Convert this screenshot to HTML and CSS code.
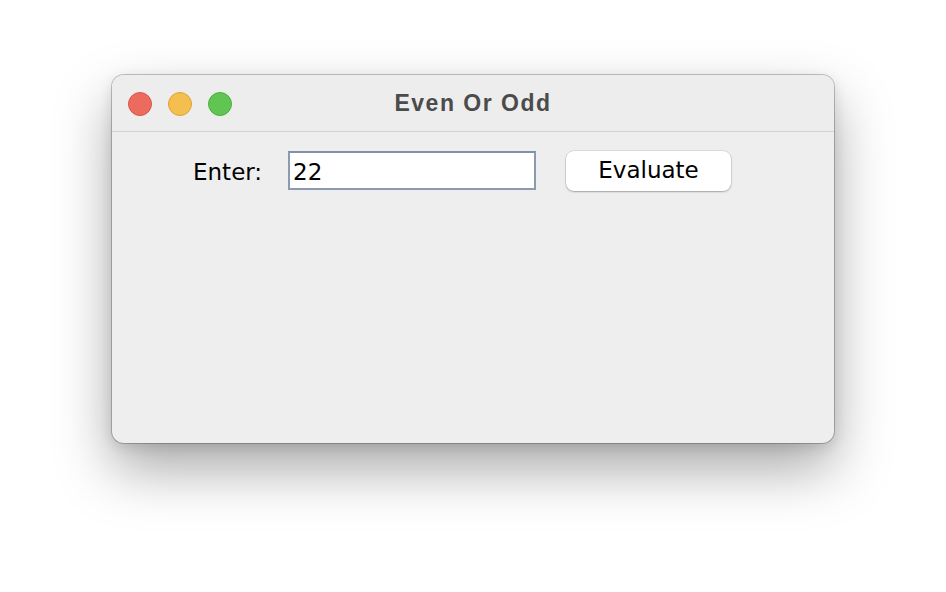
FILE: index.html
```html
<!DOCTYPE html>
<html>
<head>
<meta charset="utf-8">
<link rel="stylesheet" href="styles.css">
</head>
<body>
<div class="window">
  <div class="titlebar">
    <div class="lights">
      <span class="light red"></span>
      <span class="light yellow"></span>
      <span class="light green"></span>
    </div>
    <div class="title">Even Or Odd</div>
  </div>
  <div class="content">
    <div class="row">
      <label class="label">Enter:</label>
      <div class="field">22</div>
      <button class="btn">Evaluate</button>
    </div>
  </div>
</div>
</body>
</html>
```
FILE: styles.css
```css
html, body {
  margin: 0;
  padding: 0;
  background: #ffffff;
  width: 946px;
  height: 592px;
  overflow: hidden;
}
body {
  padding-top: 75px;
  padding-left: 112px;
  box-sizing: border-box;
}
.window {
  width: 722px;
  height: 368px;
  border-radius: 12px;
  background: #eeeeee;
  box-shadow: 0 0 0 1px rgba(0,0,0,0.22), 0 26px 56px rgba(0,0,0,0.34), 0 4px 14px rgba(0,0,0,0.12);
  overflow: hidden;
  display: flex;
  flex-direction: column;
}
.titlebar {
  height: 56px;
  border-bottom: 1px solid #d2d2d2;
  background: #ededed;
  position: relative;
  display: flex;
  align-items: center;
  justify-content: center;
}
.lights {
  position: absolute;
  left: 16px;
  top: 17px;
  display: flex;
  gap: 16px;
}
.light {
  width: 24px;
  height: 24px;
  border-radius: 50%;
  box-sizing: border-box;
}
.red { background: #ed6a5e; border: 1px solid #d8564a; }
.yellow { background: #f5bf4f; border: 1px solid #dea236; }
.green { background: #61c554; border: 1px solid #4ead3e; }
.title {
  font-family: "Liberation Sans", Arial, sans-serif;
  font-weight: bold;
  font-size: 23px;
  letter-spacing: 1.5px;
  color: #4b4b4b;
  margin-top: 1px;
}
.content {
  flex: 1;
  padding-top: 18px;
}
.row {
  display: flex;
  align-items: center;
  padding-left: 81px;
  font-family: "DejaVu Sans", sans-serif;
  font-size: 23px;
  color: #000;
}
.label {
  width: 95px;
  margin-top: 3px;
}
.field {
  width: 248px;
  height: 39px;
  box-sizing: border-box;
  background: #fff;
  border: 2px solid #8c9aae;
  border-top-color: #8292a6;
  padding-left: 3px;
  line-height: 38px;
  margin-right: 30px;
}
.btn {
  width: 165px;
  height: 40px;
  border: none;
  border-radius: 8px;
  background: #fff;
  box-shadow: 0 0 0 0.5px rgba(0,0,0,0.15), 0 1px 2px rgba(0,0,0,0.25);
  font-family: "DejaVu Sans", sans-serif;
  font-size: 23px;
  color: #000;
  padding: 0 0 3px 0;
  margin-top: 1px;
}
```
